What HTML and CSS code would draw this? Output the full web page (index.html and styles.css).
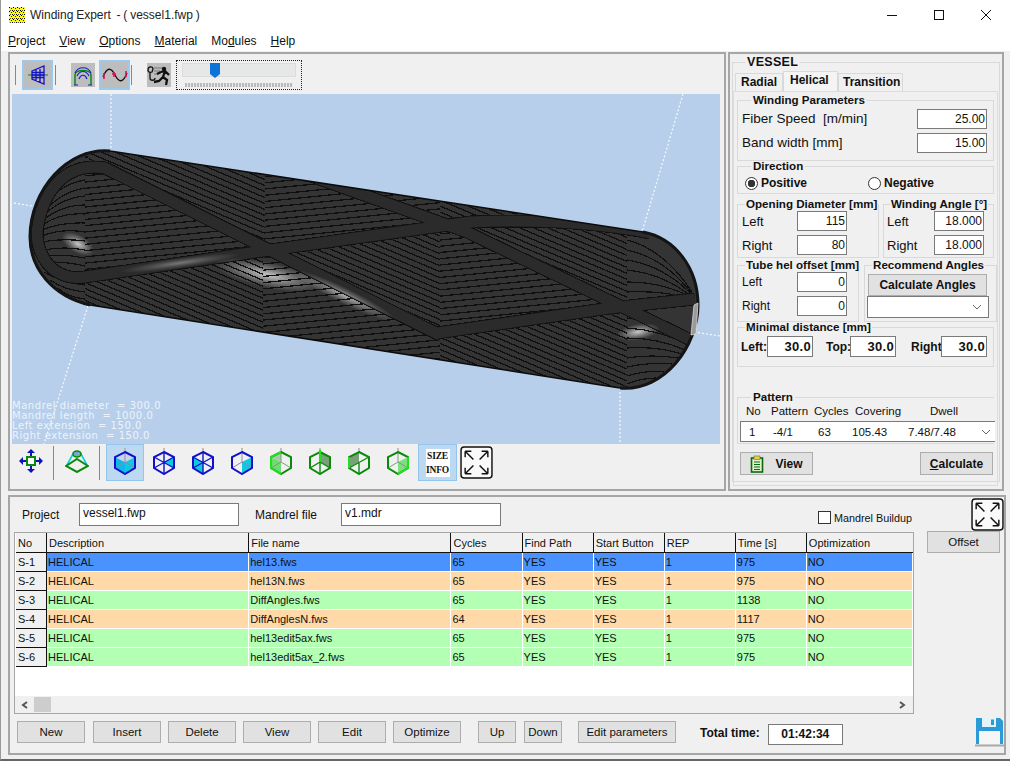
FILE: index.html
```html
<!DOCTYPE html>
<html lang="en">
<head>
<meta charset="utf-8">
<title>Winding Expert</title>
<link rel="stylesheet" href="styles.css">
</head>
<body>
<svg class="defs" width="0" height="0">
  <defs>
    <pattern id="dots" width="4" height="4" patternUnits="userSpaceOnUse"><rect width="4" height="4" fill="#ffff00"/><rect x="0" y="0" width="1" height="1" fill="#000"/><rect x="2" y="1" width="1" height="1" fill="#222"/><rect x="3" y="3" width="1" height="1" fill="#000"/><rect x="1" y="3" width="1" height="1" fill="#555"/></pattern>
    <radialGradient id="glow"><stop offset="0" stop-color="#fff" stop-opacity=".72"/><stop offset=".55" stop-color="#fff" stop-opacity=".28"/><stop offset="1" stop-color="#fff" stop-opacity="0"/></radialGradient>
    <clipPath id="hull"><path d="M110,151 L643,232 C675,238 698,268 698,305 C698,345 665,392 620,388 L90,305 C52,296 30,268 30,237 C30,190 68,147 110,151 Z"/></clipPath>
    <path id="bands" fill="none" d="M650,233 C600,223 540,219 470,222 L263,251 L85,277 C50,282 33,250 38,225 C45,185 70,162 105,168 L440,335 M695,299 L610,308 L437,333 M300,172 L467,232 L693,341"/>
    <path id="descshape" d="M85,140 H265 V248 L90,164 Z M85,275 L263,250 V345 H85 Z M263,250 L440,226 V336 Z M440,335 L627,308 V400 H440 Z M440,180 H627 V305 L467,230 L440,226 Z"/>
    <clipPath id="descclip"><use href="#descshape"/></clipPath>
    <mask id="noband" maskUnits="userSpaceOnUse" x="12" y="94" width="708" height="350"><rect x="12" y="94" width="708" height="350" fill="#fff"/><use href="#bands" stroke="#000" stroke-width="13"/></mask>
    <mask id="bandedge" maskUnits="userSpaceOnUse" x="12" y="94" width="708" height="350"><rect x="12" y="94" width="708" height="350" fill="#fff"/><use href="#bands" stroke="#000" stroke-width="11"/></mask>
    <mask id="risezone" maskUnits="userSpaceOnUse" x="12" y="94" width="708" height="350"><rect x="85" y="94" width="542" height="350" fill="#fff"/><use href="#descshape" fill="#000"/></mask>
    <symbol id="expand" viewBox="0 0 32 32"><rect x="1" y="1" width="30" height="30" rx="3" fill="#fafafa" stroke="#111" stroke-width="1.4"/><path d="M5,5 L13,13 M5,5 h6 M5,5 v6 M27,5 L19,13 M27,5 h-6 M27,5 v6 M5,27 L13,19 M5,27 h6 M5,27 v-6 M27,27 L19,19 M27,27 h-6 M27,27 v-6" fill="none" stroke="#111" stroke-width="1.4"/></symbol>
    <symbol id="hexb" viewBox="0 0 24 28"><path d="M12,1 V5" stroke="#aaa" stroke-width="1.4"/><path d="M12,5 L22,10 V21 L12,27 L2,21 V10 Z" fill="none" stroke="currentColor" stroke-width="2"/></symbol>
  </defs>
</svg>
<div class="app">
  <header class="titlebar">
    <svg class="appicon" width="16" height="16"><rect width="16" height="16" fill="url(#dots)"/></svg>
    <span class="apptitle">Winding Expert&nbsp; - ( vessel1.fwp )</span>
    <div class="winctl">
      <svg width="12" height="12"><path d="M1,6.5 H11" stroke="#111"/></svg>
      <svg width="12" height="12"><rect x="1.5" y="1.5" width="9" height="9" fill="none" stroke="#111"/></svg>
      <svg width="12" height="12"><path d="M1,1 L11,11 M11,1 L1,11" stroke="#111"/></svg>
    </div>
  </header>
  <nav class="menubar">
    <span><u>P</u>roject</span><span><u>V</u>iew</span><span><u>O</u>ptions</span><span><u>M</u>aterial</span><span>Mo<u>d</u>ules</span><span><u>H</u>elp</span>
  </nav>

  <div class="upper">
    <section class="viewpanel">
      <div class="toolbar">
        <i class="grip"></i>
        <span class="tb tb-on tb-wide tb-first">
          <svg width="22" height="22" viewBox="0 0 22 22"><path d="M1,11 H21" stroke="#0a8a0a"/><path d="M5,7 L17,2 V20 L5,15 Z M9,5 V17 M13,3.500 V18.500 M5,11 H17 M5,8.500 H17 M5,13.500 H17" fill="none" stroke="#1010c8" stroke-width="1.300"/></svg>
        </span>
        <i class="grip grip-a"></i>
        <span class="tb tb-plain">
          <svg width="22" height="22" viewBox="0 0 22 22"><path d="M3,21 V11 C3,5 19,5 19,11 V21" fill="none" stroke="#0a8a0a" stroke-width="1.500"/><path d="M3,9 C6,2 16,2 19,9 M5,12 C8,6 14,6 17,12 M7,15 C9,10 13,10 15,15 M2,21 H6 M16,21 H20" fill="none" stroke="#1a1ad0" stroke-width="1.200"/></svg>
        </span>
        <span class="tb tb-on tb-wide">
          <svg width="26" height="18" viewBox="0 0 26 18"><path d="M1,11 C5,1 9,1 13,9 C17,17 21,17 25,7" fill="none" stroke="#111" stroke-width="1.300"/><path d="M2,7 V13 M12,6 V11 M10,8 H14 M24,5 V11" stroke="#e01060" stroke-width="1.600"/></svg>
        </span>
        <i class="grip grip-b"></i>
        <span class="tb tb-plain tb-run">
          <svg width="24" height="24" viewBox="0 0 24 24"><path d="M1,7 C1,3 6,3 6,6 L5,9 C3,10 1,9 1,7 Z M3,9 V15 C3,18 8,18 8,15" fill="none" stroke="#111" stroke-width="1.300"/><path d="M7,5 H15 M7,8 H13 M7,11 H11" stroke="#777"/><circle cx="17" cy="6" r="2.200" fill="#111"/><path d="M14,9 L18,8 L22,12 M18,8 L16,14 L20,17 L19,22 M16,14 L12,18 L7,19 M14,9 L10,11" fill="none" stroke="#111" stroke-width="2.300"/></svg>
        </span>
        <div class="slider">
          <div class="track"><svg class="thumb" width="10" height="16"><path d="M0,0 H10 V11 L5,15 L0,11 Z" fill="#0a74d8"/></svg></div>
          <div class="ticks"></div>
        </div>
      </div>
      <div class="viewport">
        <svg class="scene" width="708" height="350" viewBox="12 94 708 350">
          <g fill="none" stroke="#f4f8fc" stroke-width="1.300" stroke-dasharray="2 2">
            <path d="M111,94 V152"/><path d="M14,203 L32,206"/><path d="M88,306 L44,444"/>
            <path d="M683,94 L642,232"/><path d="M620,388 V444"/><path d="M694,332 L720,336"/>
          </g>
          <g clip-path="url(#hull)">
            <rect x="12" y="94" width="708" height="350" fill="#343434"/>
            <use href="#bands" stroke="#2b2b2b" stroke-width="12"/>
            <ellipse cx="78" cy="244" rx="18" ry="9" fill="url(#glow)" transform="rotate(30 78 244)"/>
            <ellipse cx="180" cy="263" rx="60" ry="5" fill="url(#glow)" transform="rotate(-8 180 263)" opacity=".5"/>
            <ellipse cx="268" cy="275" rx="55" ry="13" fill="url(#glow)" transform="rotate(12 268 275)"/>
            <ellipse cx="345" cy="296" rx="58" ry="8" fill="url(#glow)" transform="rotate(26 345 296)" opacity=".8"/>
            <ellipse cx="638" cy="332" rx="22" ry="8" fill="url(#glow)" transform="rotate(-10 638 332)"/>
            <g mask="url(#noband)" shape-rendering="crispEdges" fill="none" stroke="#0f0f0f">
              <g clip-path="url(#descclip)">
                <path d="M477,-6 L243,546" stroke-width="900" stroke-dasharray="1.300 4.200"/>
              </g>
              <g mask="url(#risezone)">
                <path d="M330,-30 L390,570" stroke-width="900" stroke-dasharray="1.300 4.900"/>
              </g>
              <path stroke-width="1.200" d="M85,172 Q55,178 42,205 M85,180 Q58,184 42,210 M85,188 Q60,192 42,214 M85,196 Q60,198 41,218 M85,205 Q60,205 41,222 M85,214 Q60,212 41,226 M85,223 Q62,222 42,230 M85,232 Q62,228 42,236 M85,241 Q62,238 42,242 M85,250 Q64,246 44,250 M85,258 Q66,254 47,256 M85,266 Q68,262 52,262 M85,285 Q62,283 44,272 M85,292 Q64,290 50,280 M85,299 Q66,297 58,288"/>
              <path stroke-width="1.200" d="M627,318 Q660,322 690,342 M627,328 Q660,330 688,345 M627,338 Q658,338 685,350 M627,348 Q656,346 682,354 M627,358 Q652,354 678,358 M627,367 Q650,362 672,364 M627,376 Q646,370 664,372 M627,384 Q642,378 656,378"/>
              <path stroke-width="1.200" d="M627,240 Q665,250 692,292 M627,250 Q665,258 692,294 M627,260 Q665,266 693,296 M627,270 Q665,274 693,298 M627,282 Q665,282 694,299 M627,292 Q665,290 694,300"/>
            </g>
            <g mask="url(#bandedge)" shape-rendering="crispEdges">
              <use href="#bands" stroke="#0f0f0f" stroke-width="13"/>
            </g>
          </g>
          <path d="M110,151 L643,232 C675,238 698,268 698,305 C698,345 665,392 620,388 L90,305 C52,296 30,268 30,237 C30,190 68,147 110,151 Z" fill="none" stroke="#0c0c0c" stroke-width="1.600"/>
          <path d="M90,305 C52,296 30,268 30,237 C30,190 68,147 110,151 M643,232 C675,238 698,268 698,305 C698,345 665,392 620,388" fill="none" stroke="#141414" stroke-width="3"/>
          <path d="M694,305 L698,303 L696,334 L691,335 Z" fill="#9a9a9a" stroke="#e8e8e8" stroke-width=".7"/>
        </svg>
        <div class="readout">Mandrel diameter  = 300.0
Mandrel length  = 1000.0
Left extension  = 150.0
Right extension  = 150.0</div>
      </div>
      <div class="viewtools">
        <span class="vt vt-move">
          <svg width="26" height="26" viewBox="0 0 26 26"><rect x="9" y="9" width="8" height="8" fill="#fff" stroke="#0a8a0a" stroke-width="2"/><path d="M13,1 L17,5 H14 V8 H12 V5 H9 Z M13,25 L17,21 H14 V18 H12 V21 H9 Z M1,13 L5,9 V12 H8 V14 H5 V17 Z M25,13 L21,9 V12 H18 V14 H21 V17 Z" fill="#1010c0"/></svg>
        </span>
        <i class="sep"></i>
        <span class="vt vt-cone">
          <svg width="24" height="24" viewBox="0 0 24 24"><path d="M8,5 L2,16 M16,5 L22,16" stroke="#10d0e0" stroke-width="1.600"/><path d="M12,10 L23,17 L12,23 L1,17 Z" fill="none" stroke="#0a8a0a" stroke-width="2"/><ellipse cx="12" cy="5" rx="4" ry="3" fill="#7ac" stroke="#0a8a0a" stroke-width="1.600"/></svg>
        </span>
        <i class="sep"></i>
        <span class="vt vt-cube vt-on">
          <svg class="cb" width="24" height="28"><path d="M2,10 L12,15 V27 L2,21 Z" fill="#10b8e8"/><path d="M12,15 L22,10 V21 L12,27 Z" fill="#10c8e0"/><path d="M2,10 L12,5 L22,10 L12,15 Z" fill="#c8d4ec"/><path d="M12,5 V15 M2,21 L12,15 L22,21" stroke="#8a8ab0" fill="none"/><use href="#hexb"/></svg>
        </span>
        <span class="vt vt-cube">
          <svg class="cb" width="24" height="28"><path d="M12,15 L22,10 V21 Z" fill="#10c8e0"/><path d="M2,10 L22,21 M22,10 L2,21 M12,5 V27" stroke="#1010c8" stroke-width="1.400"/><use href="#hexb"/></svg>
        </span>
        <span class="vt vt-cube">
          <svg class="cb" width="24" height="28"><path d="M2,10 L12,15 V27 L2,21 Z" fill="#10c8e0"/><path d="M12,5 V27 M2,10 L22,21 M22,10 L2,21" stroke="#1010c8" stroke-width="1.400"/><use href="#hexb"/></svg>
        </span>
        <span class="vt vt-cube">
          <svg class="cb" width="24" height="28"><path d="M12,15 L22,21 L12,27 Z M12,15 L22,10 V21 Z" fill="#10c8e0"/><path d="M12,5 V15 L2,21 M12,15 L22,21" stroke="#8a8ab8" fill="none"/><use href="#hexb"/></svg>
        </span>
        <span class="vt vt-cube vt-g">
          <svg class="cb" width="24" height="28"><path d="M2,10 L12,15 V27 L2,21 Z" fill="#6edc6e"/><path d="M2,10 L12,5 V15 Z" fill="#aac8aa"/><path d="M12,5 V15 L22,21 M12,15 L2,21" stroke="#7aa07a" fill="none"/><use href="#hexb"/><path d="M2,10 L12,5 M2,10 V21 L12,27" stroke="#20e020" stroke-width="2" fill="none"/></svg>
        </span>
        <span class="vt vt-cube vt-g">
          <svg class="cb" width="24" height="28"><path d="M12,5 L22,10 V21 L12,15 Z" fill="#7aa07a"/><path d="M2,21 L12,15 L22,21 M12,27 V15" stroke="#0a8a0a" fill="none" stroke-width="1.400"/><use href="#hexb"/><path d="M12,3 V15" stroke="#20e020" stroke-width="2"/></svg>
        </span>
        <span class="vt vt-cube vt-g">
          <svg class="cb" width="24" height="28"><path d="M2,10 L12,5 V15 L2,21 Z" fill="#7aa07a"/><path d="M2,21 L22,10 M12,15 V27" stroke="#0a8a0a" fill="none" stroke-width="1.400"/><use href="#hexb"/><path d="M2,10 V21" stroke="#20e020" stroke-width="2"/></svg>
        </span>
        <span class="vt vt-cube vt-g">
          <svg class="cb" width="24" height="28"><path d="M12,15 L22,10 V21 L12,27 Z" fill="#7de07d"/><path d="M12,5 V15 M2,21 L12,15 L22,21" stroke="#7aa07a" fill="none"/><use href="#hexb"/><path d="M22,10 V21 L12,27" stroke="#20e020" stroke-width="2" fill="none"/></svg>
        </span>
        <span class="vt vt-size"><span class="sizebox">SIZE<br>INFO</span></span>
        <svg class="expand" width="33" height="33"><use href="#expand"/></svg>
      </div>
    </section>

    <section class="propspanel">
      <fieldset class="grp vessel">
        <legend class="lg-vessel">VESSEL</legend>
        <div class="tabs">
          <span class="tab">Radial</span><span class="tab tab-on">Helical</span><span class="tab">Transition</span>
        </div>
        <div class="tabpanel">
          <fieldset class="grp g-wind">
            <legend>Winding Parameters</legend>
            <div class="row big first"><span>Fiber Speed&nbsp; [m/min]</span><span class="inp w70">25.00</span></div>
            <div class="row big second"><span>Band width [mm]</span><span class="inp w70">15.00</span></div>
          </fieldset>
          <fieldset class="grp g-dir">
            <legend>Direction</legend>
            <div class="radios">
              <span class="radio radio-pos"><i class="dot dot-on"></i>Positive</span>
              <span class="radio"><i class="dot"></i>Negative</span>
            </div>
          </fieldset>
          <div class="pair p-a">
            <fieldset class="grp g-open">
              <legend>Opening Diameter [mm]</legend>
              <div class="row med"><span>Left</span><span class="inp w50">115</span></div>
              <div class="row med"><span>Right</span><span class="inp w50">80</span></div>
            </fieldset>
            <fieldset class="grp g-angle">
              <legend>Winding Angle [°]</legend>
              <div class="row med"><span>Left</span><span class="inp w50">18.000</span></div>
              <div class="row med"><span>Right</span><span class="inp w50">18.000</span></div>
            </fieldset>
          </div>
          <div class="pair p-b">
            <fieldset class="grp g-tube">
              <legend>Tube hel offset [mm]</legend>
              <div class="row small"><span>Left</span><span class="inp w50">0</span></div>
              <div class="row small"><span>Right</span><span class="inp w50">0</span></div>
            </fieldset>
            <fieldset class="grp g-rec">
              <legend>Recommend Angles</legend>
              <button class="btn b-calc">Calculate Angles</button>
              <div class="combo c-rec"><svg width="10" height="6"><path d="M1,1 L5,5 L9,1" fill="none" stroke="#666"/></svg></div>
            </fieldset>
          </div>
          <fieldset class="grp g-min">
            <legend>Minimal distance [mm]</legend>
            <div class="minrow">
              <span class="minlabel ml-left">Left:</span><span class="inp binp w45">30.0</span>
              <span class="minlabel ml-top">Top:</span><span class="inp binp w45">30.0</span>
              <span class="minlabel ml-right">Right</span><span class="inp binp w45">30.0</span>
            </div>
          </fieldset>
          <fieldset class="grp g-pat">
            <legend>Pattern</legend>
            <div class="pat pat-head"><span class="h1">No</span><span class="h2">Pattern</span><span class="h3">Cycles</span><span class="h4">Covering</span><span>Dwell</span></div>
            <div class="pat combo c-pat"><span class="c1">1</span><span class="c2">-4/1</span><span class="c3">63</span><span class="c4">105.43</span><span class="c5">7.48/7.48</span><svg width="10" height="6"><path d="M1,1 L5,5 L9,1" fill="none" stroke="#666"/></svg></div>
          </fieldset>
          <div class="actions">
            <button class="btn b-act b-view">
              <svg width="14" height="18" viewBox="0 0 14 18"><rect x="1.500" y="3" width="11" height="14" fill="#dff0d0" stroke="#0a6a0a" stroke-width="1.600"/><rect x="4" y="1" width="6" height="3.500" fill="#e8d040" stroke="#666" stroke-width=".6"/><path d="M4,7 H10 M4,9.500 H10 M4,12 H10 M4,14.500 H10" stroke="#0a6a0a"/></svg>
              <span>View</span>
            </button>
            <button class="btn b-act"><span><u>C</u>alculate</span></button>
          </div>
        </div>
      </fieldset>
    </section>
  </div>

  <section class="lower">
    <div class="lcol">
      <div class="filerow">
        <span class="flabel fl-p">Project</span><span class="finp">vessel1.fwp</span>
        <span class="flabel fl-m">Mandrel file</span><span class="finp">v1.mdr</span>
        <label class="check"><i class="box"></i>Mandrel Buildup</label>
      </div>
      <div class="gridbox">
        <table class="grid">
          <colgroup><col class="k0"><col class="k1"><col class="k1"><col class="k2"><col class="k2"><col class="k2"><col class="k2"><col class="k2"><col class="k3"></colgroup>
          <thead>
            <tr><th>No</th><th>Description</th><th>File name</th><th>Cycles</th><th>Find Path</th><th>Start Button</th><th>REP</th><th>Time [s]</th><th>Optimization</th></tr>
          </thead>
          <tbody>
            <tr class="r-blue"><th>S-1</th><td>HELICAL</td><td>hel13.fws</td><td>65</td><td>YES</td><td>YES</td><td>1</td><td>975</td><td>NO</td></tr>
            <tr class="r-orange"><th>S-2</th><td>HELICAL</td><td>hel13N.fws</td><td>65</td><td>YES</td><td>YES</td><td>1</td><td>975</td><td>NO</td></tr>
            <tr class="r-green"><th>S-3</th><td>HELICAL</td><td>DiffAngles.fws</td><td>65</td><td>YES</td><td>YES</td><td>1</td><td>1138</td><td>NO</td></tr>
            <tr class="r-orange"><th>S-4</th><td>HELICAL</td><td>DiffAnglesN.fws</td><td>64</td><td>YES</td><td>YES</td><td>1</td><td>1117</td><td>NO</td></tr>
            <tr class="r-green"><th>S-5</th><td>HELICAL</td><td>hel13edit5ax.fws</td><td>65</td><td>YES</td><td>YES</td><td>1</td><td>975</td><td>NO</td></tr>
            <tr class="r-green"><th>S-6</th><td>HELICAL</td><td>hel13edit5ax_2.fws</td><td>65</td><td>YES</td><td>YES</td><td>1</td><td>975</td><td>NO</td></tr>
          </tbody>
        </table>
        <div class="hscroll">
          <svg width="8" height="8"><path d="M6,1 L2,4 L6,7" fill="none" stroke="#555" stroke-width="2"/></svg>
          <i class="sthumb"></i>
          <svg class="sright" width="8" height="8"><path d="M2,1 L6,4 L2,7" fill="none" stroke="#555" stroke-width="2"/></svg>
        </div>
      </div>
      <div class="cmdrow">
        <button class="btn cmd w68">New</button>
        <button class="btn cmd w68 ml-ins">Insert</button>
        <button class="btn cmd w68">Delete</button>
        <button class="btn cmd w68">View</button>
        <button class="btn cmd w68">Edit</button>
        <button class="btn cmd w68">Optimize</button>
        <button class="btn cmd w38 ml-up">Up</button>
        <button class="btn cmd w38 ml-down">Down</button>
        <button class="btn cmd w98 ml-ep">Edit parameters</button>
        <span class="totlabel">Total time:</span>
        <span class="totbox">01:42:34</span>
      </div>
    </div>
    <div class="rcol">
      <svg class="expand2" width="33" height="33"><use href="#expand"/></svg>
      <button class="btn offset">Offset</button>
      <svg class="save" width="29" height="30" viewBox="0 0 29 30"><path d="M1,1 H25 L28,4 V27 H1 Z" fill="#2a9ad8"/><rect x="7" y="1" width="14" height="9" fill="#e4f2fa"/><rect x="16" y="2.500" width="3" height="5.500" fill="#2a9ad8"/><rect x="4" y="14" width="21" height="13" fill="#f6f6f6"/><path d="M0,28.500 H29" stroke="#aaa" stroke-width="2"/></svg>
    </div>
  </section>
</div>
</body>
</html>
```
FILE: styles.css
```css
* { box-sizing: border-box; }
html, body { margin: 0; padding: 0; }
body { font-family: "Liberation Sans", Arial, sans-serif; font-size: 12px; color: #111; background: #f0f0f0; }
.defs { display: block; height: 0; }
.app { width: 1010px; height: 761px; overflow: hidden; background: #f0f0f0; border-bottom: 2px solid #666; border-left: 1px solid #999; display: flex; flex-direction: column; }

.titlebar { height: 30px; flex: none; background: #fff; display: flex; align-items: center; padding-left: 8px; }
.appicon { flex: none; margin-top: -1px; }
.apptitle { margin-left: 5px; font-size: 12px; color: #222; word-spacing: -.5px; }
.winctl { margin-left: auto; display: flex; gap: 35px; padding-right: 18px; }
.menubar { height: 21px; flex: none; background: #fff; display: flex; gap: 14px; padding: 4px 0 0 7px; font-size: 12px; }

.upper { flex: none; display: flex; height: 439px; margin: 1px 0 0 7px; gap: 2px; }
.viewpanel { width: 718px; border: 2px solid #a6a6a6; padding: 6px 2px 0; display: flex; flex-direction: column; }
.toolbar { height: 34px; flex: none; display: flex; align-items: center; padding-bottom: 5px; }
.grip { display: block; width: 1px; height: 20px; background: #888; margin-left: 3px; }
.grip-a { margin-left: 2px; }
.grip-b { margin-left: 1px; }
.tb { display: flex; align-items: center; justify-content: center; background: #bdbdbd; }
.tb-wide { width: 31px; height: 30px; border: 2px solid #9cc9ee; }
.tb-first { margin-left: 6px; }
.tb-plain { width: 24px; height: 24px; margin-left: 15px; margin-right: 4px; }
.tb-run { margin-left: 15px; margin-right: 5px; }
.slider { width: 126px; height: 30px; border: 1px dotted #222; padding: 2px 5px 0; }
.track { height: 14px; background: #e6e8e8; border: 1px solid #dcdcdc; position: relative; }
.thumb { position: absolute; left: 27px; top: -1px; }
.ticks { height: 4px; margin: 6px 3px 0; background: repeating-linear-gradient(90deg, #bbb 0 2px, #e8e8e8 2px 3px); }

.viewport { width: 708px; height: 350px; flex: none; background: #b7cfea; position: relative; overflow: hidden; }
.scene { display: block; }
.readout { position: absolute; left: 0; bottom: 3px; white-space: pre; font-family: "DejaVu Sans", sans-serif; font-size: 10px; line-height: 10px; letter-spacing: .55px; color: #eef3fa; }

.viewtools { height: 40px; flex: none; display: flex; align-items: flex-start; padding-left: 5px; }
.vt { display: flex; align-items: center; justify-content: center; height: 37px; padding-bottom: 4px; }
.vt-move { width: 28px; }
.vt-cone { width: 24px; margin-left: 11px; }
.sep { display: block; width: 1px; height: 34px; background: #888; margin: 2px 0 0 8px; }
.vt-cone + .sep { margin-left: 10px; margin-right: 6px; }
.vt-cube { width: 39px; color: #1010c8; }
.vt-g { color: #0a8a0a; }
.vt-on { width: 38px; background: #bcd9f1; border: 1px solid #93c6ef; }
.cb { display: block; overflow: visible; }
.vt-size { width: 39px; margin-left: 1px; background: #bcd9f1; border: 1px solid #93c6ef; padding-bottom: 0; }
.sizebox { background: #fff; font-family: "Liberation Serif", serif; font-size: 9.500px; font-weight: bold; line-height: 14px; text-align: center; width: 24px; color: #111; letter-spacing: -.2px; }
.expand { display: block; margin: 2px 0 0 3px; }

.propspanel { width: 276px; border: 2px solid #a6a6a6; padding: 3px 2px 0 2px; }
.grp { border: 1px solid #d9d9d9; margin: 0; padding: 0; min-width: 0; }
.grp legend { height: 10px; line-height: 10px; font-weight: bold; font-size: 11.600px; padding: 0 2px; margin-left: 13px; white-space: nowrap; color: #111; }
.vessel { height: 425px; }
.vessel > .lg-vessel { font-size: 12.500px; margin-left: 12px; letter-spacing: .3px; }
.tabs { display: flex; align-items: flex-end; height: 24px; padding-left: 2px; }
.tab { height: 18px; padding: 0 5px; line-height: 17px; font-weight: bold; font-size: 12px; border: 1px solid #d9d9d9; border-bottom: 0; white-space: nowrap; }
.tab:nth-child(1) { width: 48px; }
.tab-on { height: 20px; line-height: 17px; width: 55px; padding: 0 6px; background: #f4f4f4; }
.tab:nth-child(3) { width: 65px; padding: 0 4px; }
.tabpanel { width: 265px; height: 395px; border: 1px solid #dcdcdc; padding: 3px 0 0 3px; }

.row { display: flex; align-items: center; justify-content: space-between; }
.inp { display: block; background: #fff; border: 1px solid #7a7a7a; text-align: right; height: 20px; line-height: 18px; padding-right: 1px; font-size: 12px; flex: none; }
.w70 { width: 70px; }
.w50 { width: 50px; }
.w45 { width: 46px; }
.big { font-size: 13.500px; height: 25px; padding: 0 6px 0 4px; }
.big.first { margin-top: 1px; }
.big.second { margin-top: -1px; }
.g-wind { height: 66px; width: 257px; }
.g-dir { height: 33px; width: 257px; }
.radios { display: flex; padding: 5px 0 0 7px; font-weight: bold; font-size: 12px; }
.radio { display: flex; align-items: center; gap: 3px; }
.radio-pos { width: 123px; }
.dot { display: block; width: 13px; height: 13px; border-radius: 50%; border: 1px solid #333; background: #fff; }
.dot-on { background: radial-gradient(circle, #333 0 3.500px, #fff 4px); }
.pair { display: flex; }
.p-a { margin-top: 5px; gap: 4px; }
.p-b { margin-top: 2px; gap: 5px; }
.g-open { width: 142px; height: 59px; }
.g-angle { width: 111px; height: 59px; }
.g-open legend { margin-left: 7px; padding: 0 1px; }
.g-angle legend { margin-left: 6px; padding: 0 1px; }
.med { font-size: 13px; height: 24px; padding: 0 31px 0 4px; }
.g-angle .med { padding-right: 9px; padding-left: 3px; }
.g-tube { width: 123px; height: 62px; }
.g-rec { width: 134px; height: 62px; }
.g-tube legend { margin-left: 7px; padding: 0 1px; }
.g-rec legend { margin-left: 7px; padding: 0 1px; }
.small { font-size: 12px; height: 24px; padding: 0 11px 0 4px; }
.btn { display: flex; align-items: center; justify-content: center; background: #e1e1e1; border: 1px solid #adadad; font-family: inherit; color: #111; padding: 0; margin: 0; }
.b-calc { width: 119px; height: 22px; margin: 4px 0 0 3px; font-weight: bold; font-size: 12px; }
.combo { background: #fff; border: 1px solid #7a7a7a; display: flex; align-items: center; justify-content: flex-end; padding-right: 6px; }
.c-rec { width: 122px; height: 22px; margin: 0 0 0 2px; }
.g-min { width: 257px; height: 45px; }
.g-min legend { margin-left: 7px; padding: 0 1px; }
.minrow { display: flex; align-items: center; padding: 4px 0 0 3px; font-weight: bold; font-size: 12px; }
.binp { height: 21px; line-height: 19px; font-weight: bold; font-size: 13px; letter-spacing: .3px; }
.minlabel { flex: none; }
.ml-left { width: 26px; }
.ml-top { width: 24px; margin-left: 13px; }
.ml-right { width: 30px; margin-left: 15px; }
.g-pat { width: 257px; height: 52px; margin-top: 25px; border-right: 0; }
.pat { display: flex; width: 255px; font-size: 11.500px; }
.pat-head { height: 19px; padding: 3px 0 0 8px; line-height: 13px; }
.pat-head span { display: block; flex: none; }
.h1 { width: 25px; }
.h2 { width: 43px; }
.h3 { width: 41px; }
.h4 { width: 75px; }
.c-pat { height: 21px; margin-left: 2px; justify-content: flex-start; padding: 0 0 0 8px; border-right: 0; }
.c-pat span { display: block; flex: none; }
.c1 { width: 24px; }
.c2 { width: 45px; }
.c3 { width: 34px; }
.c4 { width: 56px; }
.c5 { width: 73px; }
.c-pat svg { flex: none; }
.actions { display: flex; justify-content: space-between; margin-top: 8px; width: 253px; margin-left: 3px; }
.b-act { height: 23px; width: 73px; font-weight: bold; font-size: 12px; gap: 11px; }

.lower { flex: none; width: 998px; height: 260px; margin: 4px 0 0 7px; border: 2px solid #a6a6a6; display: flex; }
.lcol { width: 900px; margin-left: 4px; flex: none; }
.filerow { height: 35px; display: flex; align-items: center; }
.flabel { flex: none; }
.fl-p { width: 57px; margin-left: 8px; }
.fl-m { width: 86px; margin-left: 16px; }
.finp { display: block; width: 160px; height: 23px; background: #fff; border: 1px solid #7a7a7a; line-height: 19px; padding-left: 3px; flex: none; }
.check { margin-left: auto; margin-right: 2px; display: flex; align-items: center; gap: 3px; font-size: 10.800px; padding-top: 6px; }
.box { display: block; width: 13px; height: 13px; background: #fff; border: 1px solid #333; }
.gridbox { height: 182px; border: 1px solid #a6a6a6; background: #fff; display: flex; flex-direction: column; }
.grid { table-layout: fixed; width: 897px; border-collapse: separate; border-spacing: 0; margin: 0 0 0 1px; font-size: 11px; }
.k0 { width: 31px; }
.k1 { width: 202px; }
.k2 { width: 71px; }
.k3 { width: 106px; }
.grid th, .grid td { font-weight: normal; text-align: left; padding: 0 0 0 1px; height: 19px; white-space: nowrap; overflow: hidden; border-right: 1px solid #fff; border-bottom: 1px solid #fff; }
.grid thead th { background: #f0f0f0; height: 20px; border-right: 1px solid #111; border-bottom: 1px solid #111; padding-left: 2px; }
.grid thead th:last-child { border-right: 0; }
.grid tbody th { background: #f0f0f0; border-right: 1px solid #111; border-bottom: 1px solid #111; padding-left: 2px; }
.r-blue td { background: #4a93ff; }
.r-orange td { background: #ffdaa8; }
.r-green td { background: #b3ffb3; }
.hscroll { margin-top: auto; height: 17px; background: #f0f0f0; display: flex; align-items: center; padding-left: 6px; }
.sthumb { display: block; width: 17px; height: 15px; background: #cdcdcd; margin-left: 5px; }
.sright { margin-left: auto; margin-right: 7px; }
.cmdrow { display: flex; align-items: center; margin-top: 7px; height: 22px; padding-left: 3px; gap: 7px; }
.cmd { height: 22px; font-size: 11.500px; flex: none; }
.w68 { width: 68px; }
.w38 { width: 38px; }
.w98 { width: 98px; }
.ml-ins { margin-left: 1px; }
.ml-up { margin-left: 10px; }
.ml-down { margin-left: 1px; }
.ml-ep { margin-left: 9px; }
.totlabel { font-weight: bold; font-size: 12px; margin-left: 17px; flex: none; padding-top: 2px; }
.totbox { display: block; width: 75px; height: 21px; margin-left: 1px; background: #fff; border: 1px solid #7a7a7a; text-align: center; font-weight: bold; font-size: 12px; line-height: 19px; margin-top: 5px; flex: none; }
.rcol { flex: 1; display: flex; flex-direction: column; margin-left: 13px; min-width: 0; }
.expand2 { display: block; margin: 1px 0 0 44px; flex: none; }
.offset { width: 73px; height: 22px; font-size: 11.500px; flex: none; }
.save { margin: auto 0 6px 48px; display: block; flex: none; }
```
